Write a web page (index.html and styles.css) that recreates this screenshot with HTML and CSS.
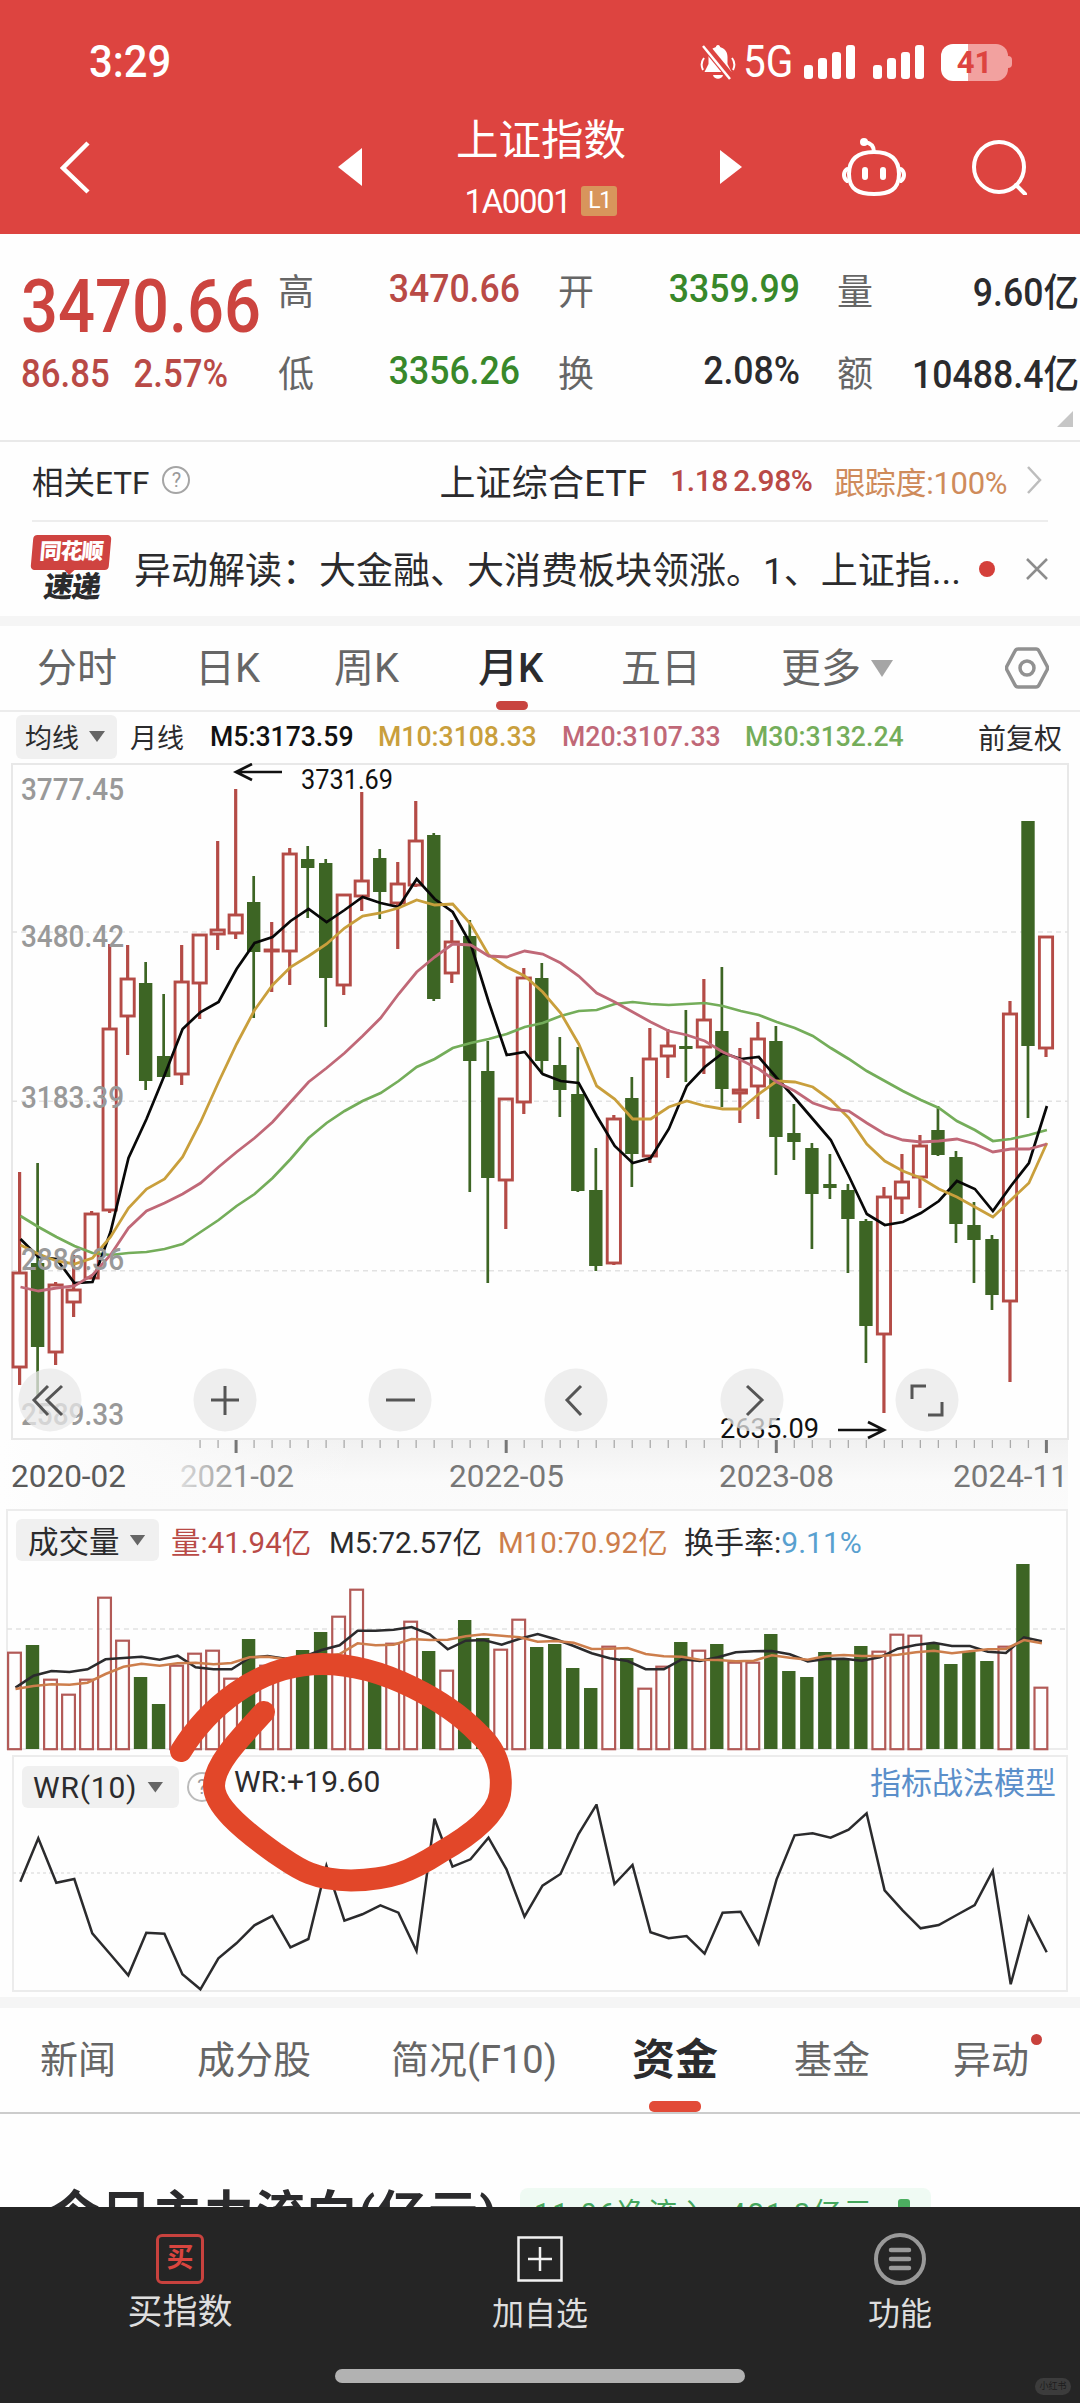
FILE: index.html
```html
<!DOCTYPE html>
<html lang="zh-CN">
<head>
<meta charset="utf-8">
<title>上证指数 1A0001</title>
<link rel="stylesheet" href="styles.css">
</head>
<body>
<div class="screen">
  <header class="header">
    <div class="status">
      <span class="clock">3:29</span>
      <div class="status-icons">
        <svg class="bell" width="36" height="36" viewBox="0 0 36 36"><path d="M18 1c1.500 0 2 1 2 2 5 1.500 7.500 5 7.500 10v7l4 8H4.500l4-8v-7c0-5 2.500-8.500 7.500-10 0-1 .5-2 2-2zM13 31h10c-1 5-9 5-10 0z" fill="#fff"/><path d="M4 14c-3 4-3 8-1 12M32 14c3 4 3 8 1 12" stroke="#fff" stroke-width="2" fill="none"/><path d="M5 2l28 34" stroke="#dd4440" stroke-width="8"/><path d="M3 2l27 33" stroke="#fff" stroke-width="2.500"/></svg>
        <span class="net">5G</span>
        <svg class="signal" width="52" height="34"><g fill="#fff"><rect x="0" y="20" width="9" height="14" rx="3"/><rect x="14" y="13" width="9" height="21" rx="3"/><rect x="28" y="7" width="9" height="27" rx="3"/><rect x="42" y="0" width="9" height="34" rx="3"/></g></svg>
        <svg class="signal second" width="52" height="34"><g fill="#fff"><rect x="0" y="20" width="9" height="14" rx="3"/><rect x="14" y="13" width="9" height="21" rx="3"/><rect x="28" y="7" width="9" height="27" rx="3"/><rect x="42" y="0" width="9" height="34" rx="3"/></g></svg>
        <div class="battery">41</div><i class="battery-tip"></i>
      </div>
    </div>
    <nav class="nav">
      <svg width="32" height="54" viewBox="0 0 32 54"><path d="M28 3L3 28l25 24" fill="none" stroke="#fff" stroke-width="4.500"/></svg>
      <svg class="prev" width="24" height="38"><path d="M24 0v38L0 19z" fill="#fff"/></svg>
      <div class="title">
        <div class="name">上证指数</div>
        <div class="code"><span>1A0001</span><b>L1</b></div>
      </div>
      <svg class="next" width="22" height="34"><path d="M0 0v34L22 17z" fill="#fff"/></svg>
      <svg class="robot" width="64" height="60" viewBox="0 0 64 60"><g fill="none" stroke="#fff" stroke-width="4" stroke-linecap="round"><path d="M32 15c0-5-3-9-9-10"/><path d="M32 15c-15 0-25 6-25 22S17 57 32 57s25-4 25-20-10-22-25-22z"/><path d="M5 32c-4 3-4 9 0 12M59 32c4 3 4 9 0 12"/><path d="M23 33v7M41 33v7" stroke-width="6"/></g><circle cx="22" cy="5" r="4" fill="#fff"/></svg>
      <svg class="search" width="56" height="56" viewBox="0 0 56 56"><g fill="none" stroke="#fff" stroke-width="4"><circle cx="27" cy="28" r="25"/><path d="M44 46l9 9" stroke-linecap="round"/></g></svg>
    </nav>
  </header>

  <section class="quote">
    <div class="last">
      <div class="price">3470.66</div>
      <div class="change"><span>86.85</span><span>2.57%</span></div>
    </div>
    <dl class="stats">
      <dt>高</dt><dd class="up">3470.66</dd><dt>开</dt><dd class="down">3359.99</dd><dt>量</dt><dd>9.60亿</dd>
      <dt>低</dt><dd class="down">3356.26</dd><dt>换</dt><dd>2.08%</dd><dt>额</dt><dd>10488.4亿</dd>
    </dl>
    <svg class="corner" width="16" height="16"><path d="M16 0v16H0z" fill="#c6c6c6"/></svg>
  </section>

  <section class="etf">
    <span class="etf-label">相关ETF</span><span class="help">?</span>
    <span class="etf-name">上证综合ETF</span><span class="etf-num">1.18</span><span class="etf-pct">2.98%</span><span class="etf-track">跟踪度:100%</span>
    <svg width="16" height="28"><path d="M2 1l12 13L2 27" fill="none" stroke="#bdbdbd" stroke-width="2.500"/></svg>
  </section>

  <section class="news">
    <div class="brand">
      <div class="brand-top"><span>同花顺</span></div>
      <div class="brand-sub">速递</div>
    </div>
    <p>异动解读：大金融、大消费板块领涨。1、上证指...</p>
    <i class="dot"></i>
    <svg width="22" height="22"><path d="M1 1l20 20M21 1L1 21" stroke="#8d8d8d" stroke-width="2.500"/></svg>
  </section>

  <nav class="periods">
    <span class="p1">分时</span><span class="p2">日K</span><span class="p3">周K</span><span class="p4 on">月K</span><span class="p5">五日</span><span class="p6">更多</span>
    <svg class="more" width="22" height="17"><path d="M0 0h22L11 17z" fill="#a5a5a5"/></svg>
    <svg class="gear" width="44" height="42" viewBox="0 0 44 42"><g fill="none" stroke="#919191" stroke-width="3.500"><path d="M13 2h18q2 0 3 2l8 15q1 2 0 4l-8 15q-1 2-3 2H13q-2 0-3-2L2 23q-1-2 0-4L10 4q1-2 3-2z"/><circle cx="22" cy="21" r="7"/></g></svg>
  </nav>

  <div class="ma-row">
    <span class="pill"><span>均线</span><i class="caret"></i></span>
    <span class="ma-kind">月线</span>
    <span class="m5">M5:3173.59</span><span class="m10">M10:3108.33</span><span class="m20">M20:3107.33</span><span class="m30">M30:3132.24</span>
    <span class="adjust">前复权</span>
  </div>

  <section class="kline">
    <svg id="kline" width="1080" height="746" viewBox="0 763 1080 746"></svg>
  </section>

  <section class="volume">
    <div class="panel-head">
      <span class="pill"><span>成交量</span><i class="caret"></i></span>
      <span class="v-now">量:41.94亿</span><span class="v-m5">M5:72.57亿</span><span class="v-m10">M10:70.92亿</span><span class="v-turn">换手率:<em>9.11%</em></span>
    </div>
    <svg id="volume" width="1080" height="192" viewBox="0 1563 1080 192"></svg>
  </section>

  <section class="wr">
    <div class="wr-head">
      <span class="pill"><span>WR(10)</span><i class="caret"></i></span><span class="help">?</span>
      <span class="wr-value">WR:+19.60</span><a>指标战法模型</a>
    </div>
    <svg id="wr" width="1080" height="189" viewBox="0 1804 1080 189"></svg>
    <svg class="scribble" width="350" height="250" viewBox="165 1645 350 250"><path d="M181 1751C205 1712 255 1664 322 1664C385 1664 450 1704 478 1733C502 1754 502 1780 500 1794C496 1818 462 1840 441 1852C410 1872 390 1880 351 1880.500C310 1880 295 1866 275 1853C240 1828 214 1805 214 1786C214 1764 240 1738 264 1712" fill="none" stroke="#e24729" stroke-width="22" stroke-linecap="round" stroke-linejoin="round"/></svg>
  </section>

  <nav class="tabs">
    <span class="t1">新闻</span><span class="t2">成分股</span><span class="t3">简况(F10)</span><span class="t4 on">资金</span><span class="t5">基金</span><span class="t6">异动<i></i></span>
  </nav>

  <section class="flow">
    <h2>今日主力流向(亿元)</h2>
    <div class="flow-tag"><span>11-06净流入 -421.3亿元</span><i></i></div>
  </section>

  <footer class="footer">
    <div class="actions">
      <div class="action buy"><span class="buy-icon">买</span><span>买指数</span></div>
      <div class="action"><svg width="52" height="54"><path d="M4.500 5.500h43v43h-43zM26 15v24M14 27h24" fill="none" stroke="#f2f2f2" stroke-width="2.500"/></svg><span>加自选</span></div>
      <div class="action"><svg width="54" height="54"><circle cx="27" cy="27" r="24" fill="none" stroke="#999" stroke-width="4"/><path d="M18 18h18M18 27h18M18 36h18" stroke="#999" stroke-width="4.500" stroke-linecap="round"/></svg><span>功能</span></div>
    </div>
    <div class="home"></div>
    <span class="stamp">小红书</span>
  </footer>
</div>
<script src="charts.js"></script>
</body>
</html>
```
FILE: styles.css
```css
* { box-sizing: border-box; }
body { margin: 0; background: #fff; }
.screen { width: 1080px; height: 2403px; overflow: hidden; background: #fefefe; color: #2b2b2d; font-family: Roboto, "Noto Sans CJK SC", sans-serif; display: flex; flex-direction: column; white-space: nowrap; }
.screen > * { flex: none; }
i, em { font-style: normal; }

.header { height: 234px; background: #dd4440; color: #fff; }
.status { height: 100px; padding: 24px 68px 0 89px; display: flex; justify-content: space-between; align-items: center; }
.clock { font-size: 45px; line-height: 50px; font-weight: 500; transform: scaleX(.93); transform-origin: left; }
.status-icons { display: flex; align-items: center; }
.net { font-size: 45px; line-height: 50px; margin-left: 7px; width: 61px; transform: scaleX(.9); transform-origin: left; }
.second { margin-left: 17px; }
.battery { width: 67px; height: 37px; margin-left: 16px; border-radius: 12px; background: linear-gradient(90deg, #fff 40%, #f2a19f 40%); color: #dd4440; font-size: 31px; font-weight: 700; line-height: 37px; text-align: center; }
.battery-tip { width: 4px; height: 12px; background: #f2a19f; border-radius: 0 4px 4px 0; }
.nav { height: 134px; padding-left: 60px; display: flex; align-items: center; }
.prev { margin-left: 246px; }
.title { width: 358px; text-align: center; }
.name { font-size: 42.5px; line-height: 50px; }
.code { height: 34px; margin-top: 18px; display: flex; justify-content: center; align-items: center; gap: 11px; font-size: 33px; letter-spacing: -1.4px; }
.code b { width: 36px; height: 30px; border-radius: 3px; background: #d8955c; font-size: 23px; font-weight: 400; line-height: 30px; }
.robot { margin-left: 100px; }
.search { margin-left: 66px; }

.quote { position: relative; height: 208px; display: flex; border-bottom: 2px solid #e9e9e9; }
.last { width: 278px; padding: 31px 0 0 21px; color: #cc443f; }
.price { font-size: 75px; line-height: 82px; font-weight: 500; transform: scaleX(.868); transform-origin: left; }
.change { display: flex; gap: 26px; padding-top: 5px; font-size: 38px; line-height: 44px; font-weight: 500; color: #b94a46; transform: scaleX(.915); transform-origin: left; }
.stats { margin: 0; padding-top: 14px; display: grid; grid-template-columns: 36px 206px 74px 206px 73px 206px; grid-template-rows: 82px 82px; align-items: center; }
.stats dt { font-size: 36px; color: #666; text-align: right; }
.stats dd { margin: 0; font-size: 39px; font-weight: 500; text-align: right; transform: scaleX(.913); transform-origin: right; }
.stats .up { color: #b94a46; }
.stats .down { color: #38882a; }
.corner { position: absolute; right: 7px; bottom: 13px; }

.etf { height: 80px; margin: 0 32px; border-bottom: 2px solid #ededed; display: flex; align-items: center; padding: 0 6px 2px 0; }
.etf-label { font-size: 31.5px; }
.help { width: 28px; height: 28px; border: 2px solid #a5a5a5; border-radius: 50%; color: #999; font-size: 20px; line-height: 24px; text-align: center; }
.etf .help { margin-left: 13px; }
.etf-name { margin-left: 249px; width: 231px; font-size: 36px; letter-spacing: 0.2px; }
.etf-num, .etf-pct { font-size: 30px; font-weight: 500; color: #b94a46; letter-spacing: -0.5px; }
.etf-num { width: 63px; }
.etf-pct { width: 101px; }
.etf-track { font-size: 31px; width: 192px; color: #cf8b5b; letter-spacing: -0.3px; }

.news { height: 94px; padding-left: 32px; display: flex; align-items: center; }
.brand { width: 80px; height: 68px; }
.brand-top { position: relative; width: 78px; height: 35px; background: #cf4340; color: #fff; transform: skewX(-5deg); border-radius: 4px; text-align: center; }
.brand-top::after { content: ""; position: absolute; left: 34px; bottom: -5px; border: 5px solid transparent; border-top-color: #cf4340; border-bottom: 0; }
.brand-top span, .brand-sub { display: block; font-weight: 900; letter-spacing: -1px; }
.brand-top span { font-size: 22px; line-height: 33px; }
.brand-sub { font-size: 29px; line-height: 35px; padding-left: 12px; transform: skewX(-8deg); }
.news p { margin: -2px 0 0 22px; width: 845px; font-size: 37px; }
.dot { width: 16px; height: 16px; margin-right: 31px; border-radius: 50%; background: #d43f3a; }

.periods { height: 96px; border-top: 10px solid #f5f5f5; border-bottom: 2px solid #ececec; padding-left: 37px; display: flex; align-items: center; font-size: 40px; color: #666; }
.periods span { height: 84px; line-height: 86px; }
.p1 { width: 158px; } .p2 { width: 139px; } .p3 { width: 144px; } .p4 { width: 143px; } .p5 { width: 160px; } .p6 { width: 90px; }
.on { position: relative; }
.on::after { content: ""; position: absolute; border-radius: 5px; background: #c8443f; left: 18px; bottom: 0; width: 32px; height: 9px; }
.periods .on { color: #2b2b2d; font-weight: 500; }
.gear { margin-left: 112px; }

.ma-row { height: 51px; padding: 0 0 2px 16px; display: flex; align-items: center; font-size: 27px; font-weight: 500; }
.pill { display: flex; align-items: center; background: #f0f0f0; border-radius: 6px; font-weight: 400; }
.caret { width: 16px; height: 11px; background: #666; clip-path: polygon(0 0, 100% 0, 50% 100%); }
.ma-row .pill { width: 101px; height: 44px; padding-left: 9px; gap: 10px; }
.ma-kind { margin-left: 13px; width: 80px; font-weight: 400; }
.m5 { width: 168px; color: #111; } .m10 { width: 184px; color: #c99f3c; } .m20 { width: 183px; color: #c06877; } .m30 { width: 233px; color: #74ad5a; }
.m5, .m10, .m20, .m30 { font-size: 28px; transform: scaleX(.95); transform-origin: left; }
.adjust { font-weight: 400; font-size: 28px; }

.kline { height: 746px; }
svg { display: block; flex: none; }

.volume { height: 246px; }
.panel-head { height: 54px; margin: 0 12px 0 6px; border: 2px solid #ececec; border-bottom: 0; padding: 6px 0 0 8px; display: flex; align-items: center; font-size: 29.5px; }
.panel-head .pill { width: 143px; height: 42px; padding-left: 12px; gap: 10px; font-size: 30.5px; }
.v-now { margin-left: 12px; width: 158px; color: #b94a46; }
.v-m5 { width: 169px; } .v-m10 { width: 186px; color: #cd7e4c; }
.v-turn { font-size: 30px; }
.v-turn em { color: #58a0cf; }

.wr { position: relative; height: 253px; border-bottom: 11px solid #f5f5f5; }
.wr-head { height: 49px; margin: 0 12px; border: 2px solid #ececec; border-bottom: 0; padding-left: 8px; display: flex; align-items: center; font-size: 30px; }
.wr-head .pill { width: 157px; height: 42px; margin-top: 13px; padding-left: 11px; gap: 10px; font-size: 30px; letter-spacing: 0.8px; }
.wr-head .help { width: 30px; height: 30px; margin: 13px 0 0 8px; border-color: #bbb; line-height: 26px; }
.wr-value { width: 636px; margin: 2px 0 0 17px; letter-spacing: 0.2px; }
.wr-head a { color: #5b8fca; font-size: 31px; }
.scribble { position: absolute; left: 165px; top: -110px; }

.tabs { height: 106px; border-bottom: 2px solid #ccc; padding-left: 40px; display: flex; font-size: 38px; line-height: 104px; color: #666; }
.t1 { width: 157px; } .t2 { width: 194px; } .t3 { width: 241px; } .t4 { width: 162px; } .t5 { width: 159px; }
.t6 { position: relative; }
.t6 i { position: absolute; right: -13px; top: 26px; width: 11px; height: 11px; border-radius: 50%; background: #c8413c; }
.tabs .on { font-size: 43px; font-weight: 700; color: #2b2b2d; }
.tabs .on::after { background: #e24b38; left: 17px; width: 52px; height: 11px; }
.flow { height: 93px; overflow: hidden; padding: 74px 0 0 50px; display: flex; align-items: flex-start; }
.flow h2 { margin: 0; width: 470px; font-size: 50px; line-height: 54px; letter-spacing: 1.3px; }
.flow-tag { width: 411px; height: 60px; padding: 4px 0 0 14px; background: #effaf3; border-radius: 8px; display: flex; color: #44a65c; font-size: 29px; letter-spacing: 2px; line-height: 44px; }
.flow-tag span { width: 364px; }
.flow-tag i { width: 12px; height: 30px; margin-top: 7px; background: #4cae60; border-radius: 3px; }

.footer { position: relative; height: 197px; background: #252525; color: #dedede; }
.actions { height: 162px; display: grid; grid-template-columns: repeat(3, 360px); padding-top: 25px; }
.action { display: flex; flex-direction: column; align-items: center; gap: 4px; font-size: 32px; line-height: 48px; }
.buy { font-size: 35px; gap: 3px; }
.buy-icon { width: 48px; height: 50px; margin: 2px 0; border: 3px solid #c8423e; border-radius: 6px; color: #d9453f; font-size: 27px; font-weight: 700; line-height: 43px; text-align: center; }
.home { width: 410px; height: 14px; margin: 0 auto; border-radius: 7px; background: #b2b2b2; }
.stamp { position: absolute; right: 9px; bottom: 9px; width: 36px; height: 17px; border-radius: 9px; background: #3c3c3c; color: #1d1d1d; font-size: 9px; line-height: 17px; text-align: center; }

.axis-label { fill: #999; font-size: 31px; }
.date { fill: #777; font-size: 31px; }
.extreme { fill: #111; font-size: 27px; }
```
FILE: charts.js
```js
const STEP = 18.007;
const RED = '#b44b46', GREEN = '#3d6524';

// [direction, high, body top, body bottom, low]
const candles = [
  ['r',1172,1273,1367,1385],['g',1163,1263,1347,1398],['r',1282,1285,1352,1365],['r',1255,1290,1302,1317],['r',1211,1214,1278,1279],
  ['r',944,1029,1210,1213],['r',945,979,1016,1055],['g',962,983,1081,1090],['g',994,1056,1077,1077],['r',945,982,1074,1085],
  ['r',935,935,983,1019],['r',841,930,934,950],['r',789,915,933,939],['g',876,902,952,1018],['r',922,950,951,992],
  ['r',848,854,951,985],['g',846,859,868,918],['g',859,863,978,1027],['r',895,895,985,995],['r',792,881,896,911],
  ['g',849,858,892,919],['r',862,884,903,949],['r',801,841,885,887],['g',833,835,999,1001],['r',920,942,973,983],
  ['g',920,936,1061,1192],['g',1041,1071,1178,1283],['r',1099,1099,1180,1229],['r',968,978,1102,1114],['g',963,978,1061,1074],
  ['g',1037,1065,1090,1117],['g',1047,1094,1191,1192],['g',1148,1190,1266,1271],['r',1115,1119,1263,1265],['g',1077,1098,1154,1187],
  ['r',1028,1059,1156,1163],['r',1029,1046,1056,1078],['g',1010,1046,1049,1082],['r',979,1020,1047,1074],['g',967,1031,1089,1107],
  ['r',1048,1090,1093,1123],['r',1022,1039,1086,1119],['g',1026,1041,1137,1175],['g',1104,1133,1142,1160],['g',1143,1148,1194,1249],
  ['g',1154,1184,1188,1199],['g',1184,1190,1219,1273],['g',1219,1221,1326,1363],['r',1187,1197,1334,1413],['r',1154,1182,1198,1214],
  ['r',1135,1146,1177,1208],['g',1106,1130,1155,1156],['g',1151,1157,1224,1243],['g',1202,1225,1240,1283],['g',1235,1239,1295,1310],
  ['r',1001,1014,1301,1382],['g',821,821,1046,1118],['r',937,937,1048,1057]
];
const averages = [
  ['#74ad5a', 2.7, [1216,1227,1237,1246,1253,1255,1253,1252,1249,1244,1232,1220,1206,1194,1178,1159,1138,1123,1111,1101,1093,1081,1067,1059,1048,1043,1039,1034,1027,1023,1016,1011,1010,1004,1002,1004,1005,1004,1003,1006,1011,1015,1022,1028,1036,1048,1059,1071,1081,1091,1100,1108,1121,1130,1141,1139,1135,1130]],
  ['#080808', 2.7, [1239,1257,1259,1283,1282,1232,1158,1119,1075,1029,1012,1002,969,943,937,921,909,922,910,897,903,907,879,899,912,944,1002,1055,1052,1074,1081,1083,1116,1146,1163,1158,1129,1086,1067,1053,1059,1057,1078,1098,1119,1140,1176,1214,1225,1222,1213,1201,1181,1189,1211,1186,1163,1106]],
  ['#c99f3c', 2.8, [1245,1254,1261,1264,1258,1237,1208,1189,1179,1157,1122,1082,1044,1010,985,967,956,944,928,916,913,908,900,905,904,924,955,967,976,992,1013,1044,1086,1099,1119,1119,1107,1101,1106,1109,1109,1094,1081,1082,1087,1100,1118,1144,1161,1171,1178,1189,1197,1207,1217,1200,1183,1143]],
  ['#c06877', 2.8, [1287,1291,1288,1286,1275,1255,1228,1211,1203,1194,1183,1167,1152,1138,1122,1102,1082,1068,1053,1036,1018,994,972,957,944,945,956,957,951,954,963,976,993,1002,1012,1022,1031,1035,1041,1052,1060,1069,1082,1091,1103,1109,1111,1123,1134,1140,1142,1141,1139,1144,1152,1149,1149,1144]]
];
const volumeTops = [1652,1645,1679,1694,1679,1597,1640,1677,1704,1665,1653,1650,1678,1639,1665,1662,1650,1632,1616,1589,1665,1643,1621,1651,1670,1620,1638,1649,1619,1647,1644,1668,1688,1646,1658,1688,1666,1642,1650,1644,1662,1662,1634,1671,1677,1652,1659,1646,1651,1634,1635,1644,1664,1652,1661,1646,1564,1687];
const volumeM5 = [563,527,513,516,508,478,474,470,479,467,502,508,508,473,468,476,470,450,436,392,392,389,381,403,448,422,420,434,416,402,418,438,460,475,483,508,508,478,483,472,457,454,453,463,484,477,476,482,472,446,435,428,438,438,455,459,412,424];
const volumeM10 = [567,558,553,554,548,522,500,491,497,490,488,493,489,472,470,478,480,470,462,430,436,434,417,420,419,409,403,407,412,425,423,428,447,446,444,462,469,470,479,480,484,482,466,473,479,468,465,468,468,464,457,452,460,454,448,447,420,430];
const wr = [425,295,428,417,580,643,706,578,581,703,748,655,610,556,528,622,597,377,542,523,496,518,633,236,380,358,293,388,530,437,402,282,194,432,375,577,595,588,641,518,515,611,418,286,280,293,269,220,451,511,565,555,525,495,393,733,532,637];

const line = (x0, ys, color, width) =>
  `<polyline points="${ys.map((y, i) => (x0 + i * STEP).toFixed(1) + ',' + y.toFixed(1)).join(' ')}" fill="none" stroke="${color}" stroke-width="${width}"/>`;
const dashed = (y, x1, x2, dash) =>
  `<path d="M${x1} ${y}H${x2}" stroke="#e2e2e2" stroke-width="1.5" stroke-dasharray="${dash}"/>`;
const label = (cls, x, y, text, width, extra = '') =>
  `<text class="${cls}" x="${x}" y="${y}" textLength="${width}" lengthAdjust="spacingAndGlyphs" ${extra}>${text}</text>`;

function drawKline() {
  let out = `<defs>
    <linearGradient id="band" x1="0" x2="0" y1="0" y2="1"><stop offset="0" stop-color="#f1f1f1"/><stop offset=".6" stop-color="#fafafa"/><stop offset="1" stop-color="#fbfbfb"/></linearGradient>
    <linearGradient id="veil"><stop offset="0" stop-color="#fefefe"/><stop offset=".3" stop-color="#fbfbfb"/><stop offset="1" stop-color="#fbfbfb" stop-opacity="0"/></linearGradient>
    <linearGradient id="fade"><stop offset="0" stop-color="#ddd"/><stop offset=".6" stop-color="#888"/></linearGradient></defs>
    <rect x="0" y="1439" width="1068" height="70" fill="url(#band)"/>
    <rect x="0" y="1439" width="360" height="70" fill="url(#veil)"/>
    <rect x="12" y="764" width="1056" height="675" fill="none" stroke="#e8e8e8" stroke-width="2"/>`;
  [932, 1101.3, 1270.7].forEach(y => out += dashed(y, 12, 1068, '5 4'));
  candles.forEach(([kind, high, top, bottom, low], i) => {
    const x = 19.6 + i * STEP;
    if (kind === 'g') {
      out += `<path d="M${x} ${high}V${low}" stroke="${GREEN}" stroke-width="2.7"/><rect x="${x - 6.7}" y="${top}" width="13.4" height="${bottom - top}" fill="${GREEN}"/>`;
    } else {
      out += `<path d="M${x} ${high}V${top}M${x} ${bottom}V${low}" stroke="${RED}" stroke-width="3.2"/><rect x="${x - 6.6}" y="${top}" width="13.2" height="${bottom - top}" fill="none" stroke="${RED}" stroke-width="2.9"/>`;
    }
  });
  averages.forEach(([color, width, ys]) => out += line(20.5, ys, color, width));
  [[800, '3777.45'], [947, '3480.42'], [1108, '3183.39'], [1270, '2886.36'], [1425, '2589.33']]
    .forEach(([y, t]) => out += label('axis-label', 21, y, t, 103, 'font-weight="500"'));
  out += label('extreme', 301, 789, '3731.69', 92) + label('extreme', 720, 1438, '2635.09', 99);
  out += `<path d="M282 772H237M252 764L236 772L252 780M838 1430H883M868 1422L884 1430L868 1438" fill="none" stroke="#111" stroke-width="2.7"/>`;
  const icons = ['M48 1386L34 1400L48 1415M62 1386L47 1400L62 1415', 'M211 1400H239M225 1386V1415', 'M386 1400H415', 'M581 1386L567 1400L581 1415', 'M747 1386L762 1400L747 1415', 'M912 1399V1386H926M942 1402V1415H928'];
  [50, 225, 400, 576, 752, 927].forEach((x, i) => out += `<circle cx="${x}" cy="1400" r="31.5" fill="#e8e8e8" fill-opacity=".75"/><path d="${icons[i]}" fill="none" stroke="#555" stroke-width="3"/>`);
  for (let i = 10; i < 58; i++) {
    const major = (i - 12) % 15 === 0;
    out += `<path d="M${20 + i * STEP} 1440v${major ? 13 : 8}" stroke="${major ? '#777' : '#aaa'}" stroke-width="${major ? 3 : 1.3}"/>`;
  }
  out += label('date', 11, 1487, '2020-02', 115, 'style="fill:#5a5a5a"');
  out += label('date', 180, 1487, '2021-02', 114, 'style="fill:url(#fade)"');
  out += label('date', 449, 1487, '2022-05', 115) + label('date', 719, 1487, '2023-08', 115) + label('date', 953, 1487, '2024-11', 115);
  document.getElementById('kline').innerHTML = out;
}

function drawVolume() {
  let out = `<path d="M7 1563V1749H1067V1563" fill="none" stroke="#ececec" stroke-width="2"/>` + dashed(1629, 7, 1067, '5 4');
  volumeTops.forEach((top, i) => {
    const x = 14.5 + i * STEP;
    out += candles[i][0] === 'g'
      ? `<rect x="${x - 6.7}" y="${top}" width="13.4" height="${1749 - top}" fill="${GREEN}"/>`
      : `<rect x="${x - 6.4}" y="${top + .7}" width="12.8" height="${1748.5 - top}" fill="none" stroke="#b25a57" stroke-width="2.2"/>`;
  });
  out += line(15.5, volumeM5.map(v => 1500 + v / 3), '#2b2b2d', 2.6) + line(15.5, volumeM10.map(v => 1500 + v / 3), '#cd7e4c', 2.6);
  document.getElementById('volume').innerHTML = out;
}

function drawWr() {
  document.getElementById('wr').innerHTML =
    `<path d="M13 1804V1991H1067V1804" fill="none" stroke="#ececec" stroke-width="2"/>` +
    dashed(1873, 13, 1067, '3 3') + line(20.3, wr.map(v => 1740 + v / 3), '#2b2b2d', 2.5);
}

drawKline();
drawVolume();
drawWr();
```
